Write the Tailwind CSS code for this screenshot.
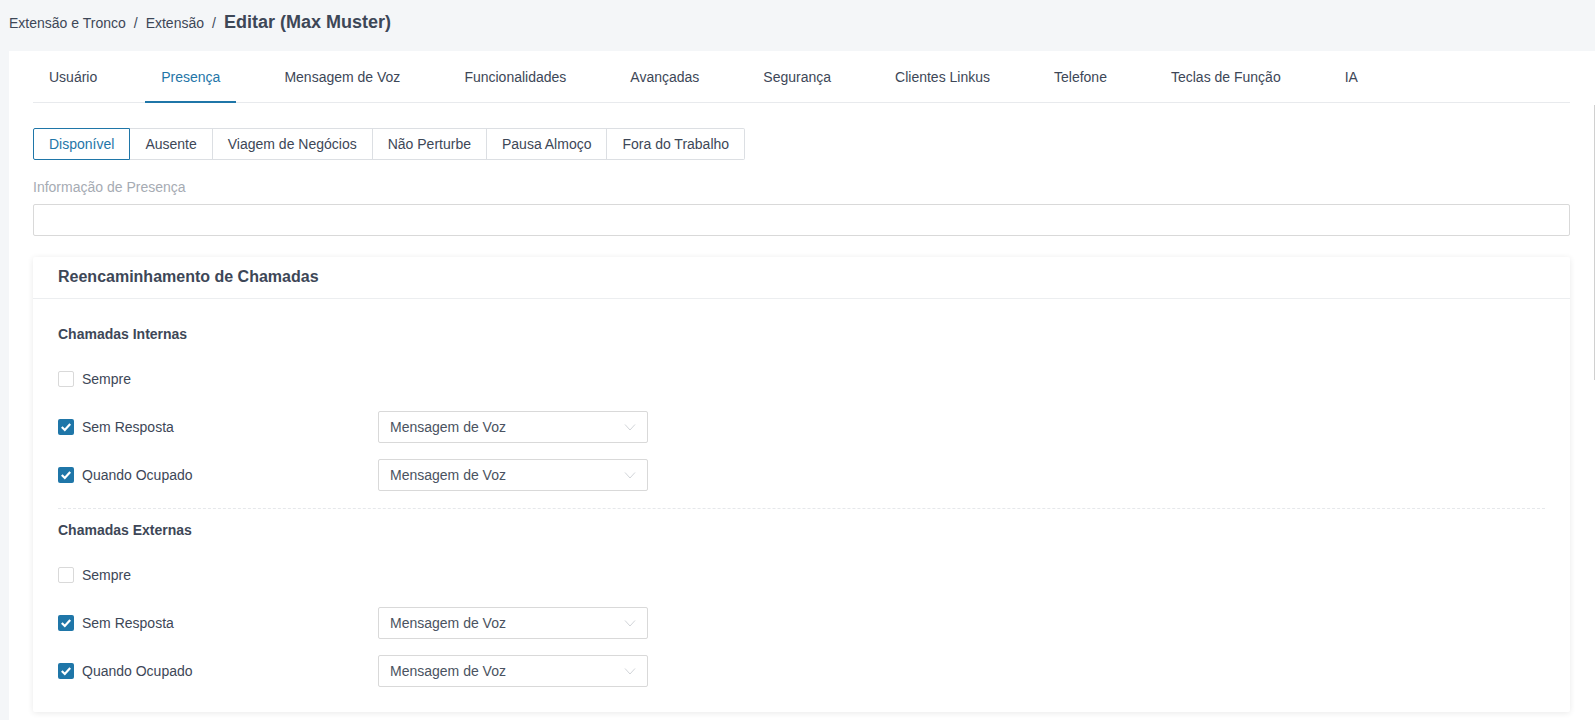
<!DOCTYPE html>
<html lang="pt">
<head>
  <meta charset="UTF-8" />
  <title>Editar (Max Muster)</title>
  <script src="https://cdn.jsdelivr.net/npm/@tailwindcss/browser@4"></script>
</head>
<body class="bg-[#f4f6f8] h-screen overflow-hidden font-['Liberation_Sans',Arial,sans-serif] text-sm text-[#3d4757]">

  <!-- Breadcrumb -->
  <div class="h-[51px] pl-[9px] pb-[5px] flex items-center">
    <span>Extensão e Tronco</span>
    <span class="mx-[8px]">/</span>
    <span>Extensão</span>
    <span class="mx-[8px]">/</span>
    <span class="text-[18px] font-bold">Editar (Max Muster)</span>
  </div>

  <div class="relative ml-[9px] bg-white h-[669px] pl-[24px] pr-[25px]">
    <!-- Scrollbar -->
    <div class="absolute right-0 top-[54px] h-[275px] w-[1px] bg-[#d0d0d0]"></div>

    <!-- Tabs -->
    <div class="flex gap-[32px] h-[52px] border-b border-[#e8eaed]">
      <div class="px-4 leading-[52px]">Usuário</div>
      <div class="px-4 leading-[52px] h-[52px] text-[#1f76a8] border-b-2 border-[#1f76a8]">Presença</div>
      <div class="px-4 leading-[52px]">Mensagem de Voz</div>
      <div class="px-4 leading-[52px]">Funcionalidades</div>
      <div class="px-4 leading-[52px]">Avançadas</div>
      <div class="px-4 leading-[52px]">Segurança</div>
      <div class="px-4 leading-[52px]">Clientes Linkus</div>
      <div class="px-4 leading-[52px]">Telefone</div>
      <div class="px-4 leading-[52px]">Teclas de Função</div>
      <div class="px-4 leading-[52px]">IA</div>
    </div>

    <!-- Presence status -->
    <div class="flex mt-[25px] h-[32px] leading-[30px]">
      <div class="px-[15px] border border-[#1f76a8] rounded-l-[2px] text-[#1f76a8]">Disponível</div>
      <div class="px-[15px] border border-l-0 border-[#dcdfe3]">Ausente</div>
      <div class="px-[15px] border border-l-0 border-[#dcdfe3]">Viagem de Negócios</div>
      <div class="px-[15px] border border-l-0 border-[#dcdfe3]">Não Perturbe</div>
      <div class="px-[15px] border border-l-0 border-[#dcdfe3]">Pausa Almoço</div>
      <div class="px-[15px] border border-l-0 border-[#dcdfe3] rounded-r-[2px]">Fora do Trabalho</div>
    </div>

    <div class="mt-[16px] leading-[22px] text-[#a6abb3]">Informação de Presença</div>
    <div class="mt-[6px] h-[32px] border border-[#d9d9d9] rounded-[2px]"></div>

    <!-- Call forwarding card -->
    <div class="mt-[21px] bg-white rounded-[2px] shadow-[0_1px_6px_rgba(0,0,0,0.09)] h-[455px]">
      <div class="h-[42px] pl-[25px] pb-[1px] flex items-center border-b border-[#eceef0] text-[16px] font-bold">Reencaminhamento de Chamadas</div>

      <div class="px-[25px] pt-[24px]">
        <div class="font-bold text-[14px] leading-[22px]">Chamadas Internas</div>

        <div class="mt-[18px] flex flex-col gap-[16px]">
          <div class="flex items-center h-[32px]">
            <span class="w-4 h-4 border border-[#d9d9d9] rounded-[2px] bg-white"></span>
            <span class="ml-2">Sempre</span>
          </div>
          <div class="flex items-center h-[32px]">
            <div class="w-[320px] flex items-center">
              <span class="w-4 h-4 rounded-[2px] bg-[#1f76a8] flex items-center justify-center">
                <svg width="12" height="12" viewBox="0 0 12 12" fill="none" stroke="white" stroke-width="2.2"><path d="M1.8 6 L4.8 9 L10.2 3"/></svg>
              </span>
              <span class="ml-2">Sem Resposta</span>
            </div>
            <div class="w-[270px] h-[32px] border border-[#d9d9d9] rounded-[2px] pl-[11px] pr-[11px] flex items-center justify-between">
              <span class="text-[#4a5361]">Mensagem de Voz</span>
              <svg width="12" height="12" viewBox="0 0 12 12" fill="none" stroke="#d2d5d9" stroke-width="1"><path d="M1 3.5 L6 9 L11 3.5"/></svg>
            </div>
          </div>
          <div class="flex items-center h-[32px]">
            <div class="w-[320px] flex items-center">
              <span class="w-4 h-4 rounded-[2px] bg-[#1f76a8] flex items-center justify-center">
                <svg width="12" height="12" viewBox="0 0 12 12" fill="none" stroke="white" stroke-width="2.2"><path d="M1.8 6 L4.8 9 L10.2 3"/></svg>
              </span>
              <span class="ml-2">Quando Ocupado</span>
            </div>
            <div class="w-[270px] h-[32px] border border-[#d9d9d9] rounded-[2px] pl-[11px] pr-[11px] flex items-center justify-between">
              <span class="text-[#4a5361]">Mensagem de Voz</span>
              <svg width="12" height="12" viewBox="0 0 12 12" fill="none" stroke="#d2d5d9" stroke-width="1"><path d="M1 3.5 L6 9 L11 3.5"/></svg>
            </div>
          </div>
        </div>

        <div class="mt-[17px] border-t border-dashed border-[#e6e8eb]"></div>

        <div class="mt-[10px] font-bold text-[14px] leading-[22px]">Chamadas Externas</div>

        <div class="mt-[18px] flex flex-col gap-[16px]">
          <div class="flex items-center h-[32px]">
            <span class="w-4 h-4 border border-[#d9d9d9] rounded-[2px] bg-white"></span>
            <span class="ml-2">Sempre</span>
          </div>
          <div class="flex items-center h-[32px]">
            <div class="w-[320px] flex items-center">
              <span class="w-4 h-4 rounded-[2px] bg-[#1f76a8] flex items-center justify-center">
                <svg width="12" height="12" viewBox="0 0 12 12" fill="none" stroke="white" stroke-width="2.2"><path d="M1.8 6 L4.8 9 L10.2 3"/></svg>
              </span>
              <span class="ml-2">Sem Resposta</span>
            </div>
            <div class="w-[270px] h-[32px] border border-[#d9d9d9] rounded-[2px] pl-[11px] pr-[11px] flex items-center justify-between">
              <span class="text-[#4a5361]">Mensagem de Voz</span>
              <svg width="12" height="12" viewBox="0 0 12 12" fill="none" stroke="#d2d5d9" stroke-width="1"><path d="M1 3.5 L6 9 L11 3.5"/></svg>
            </div>
          </div>
          <div class="flex items-center h-[32px]">
            <div class="w-[320px] flex items-center">
              <span class="w-4 h-4 rounded-[2px] bg-[#1f76a8] flex items-center justify-center">
                <svg width="12" height="12" viewBox="0 0 12 12" fill="none" stroke="white" stroke-width="2.2"><path d="M1.8 6 L4.8 9 L10.2 3"/></svg>
              </span>
              <span class="ml-2">Quando Ocupado</span>
            </div>
            <div class="w-[270px] h-[32px] border border-[#d9d9d9] rounded-[2px] pl-[11px] pr-[11px] flex items-center justify-between">
              <span class="text-[#4a5361]">Mensagem de Voz</span>
              <svg width="12" height="12" viewBox="0 0 12 12" fill="none" stroke="#d2d5d9" stroke-width="1"><path d="M1 3.5 L6 9 L11 3.5"/></svg>
            </div>
          </div>
        </div>
      </div>
    </div>
  </div>
</body>
</html>
